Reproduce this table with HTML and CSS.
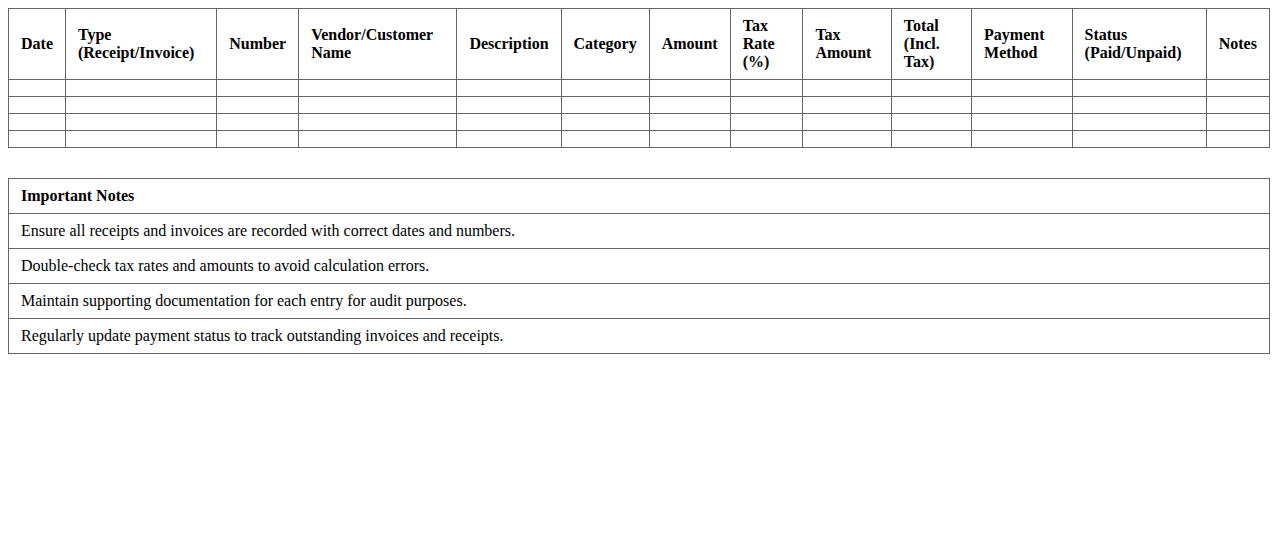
FILE: index.html
```html
<!DOCTYPE html>
<html>
<head>
<meta charset="utf-8">
<link rel="stylesheet" href="styles.css">
</head>
<body>
<table class="ledger">
  <thead>
    <tr>
      <th>Date</th>
      <th>Type (Receipt/Invoice)</th>
      <th>Number</th>
      <th>Vendor/Customer Name</th>
      <th>Description</th>
      <th>Category</th>
      <th>Amount</th>
      <th>Tax Rate (%)</th>
      <th>Tax Amount</th>
      <th>Total (Incl. Tax)</th>
      <th>Payment Method</th>
      <th>Status (Paid/Unpaid)</th>
      <th>Notes</th>
    </tr>
  </thead>
  <tbody>
    <tr><td></td><td></td><td></td><td></td><td></td><td></td><td></td><td></td><td></td><td></td><td></td><td></td><td></td></tr>
    <tr><td></td><td></td><td></td><td></td><td></td><td></td><td></td><td></td><td></td><td></td><td></td><td></td><td></td></tr>
    <tr><td></td><td></td><td></td><td></td><td></td><td></td><td></td><td></td><td></td><td></td><td></td><td></td><td></td></tr>
    <tr><td></td><td></td><td></td><td></td><td></td><td></td><td></td><td></td><td></td><td></td><td></td><td></td><td></td></tr>
  </tbody>
</table>

<table class="notes">
  <thead>
    <tr><th>Important Notes</th></tr>
  </thead>
  <tbody>
    <tr><td>Ensure all receipts and invoices are recorded with correct dates and numbers.</td></tr>
    <tr><td>Double-check tax rates and amounts to avoid calculation errors.</td></tr>
    <tr><td>Maintain supporting documentation for each entry for audit purposes.</td></tr>
    <tr><td>Regularly update payment status to track outstanding invoices and receipts.</td></tr>
  </tbody>
</table>
</body>
</html>
```

FILE: styles.css
```css
body {
  margin: 8px;
  font-family: "Liberation Serif", "Times New Roman", serif;
  font-size: 16px;
  color: #000;
  background: #fff;
}

table {
  width: 100%;
  border-collapse: collapse;
}

th, td {
  border: 1px solid #666;
  padding: 8px 12px;
  text-align: left;
}

th {
  font-weight: bold;
  vertical-align: middle;
}

.ledger {
  margin-bottom: 30px;
}
```
